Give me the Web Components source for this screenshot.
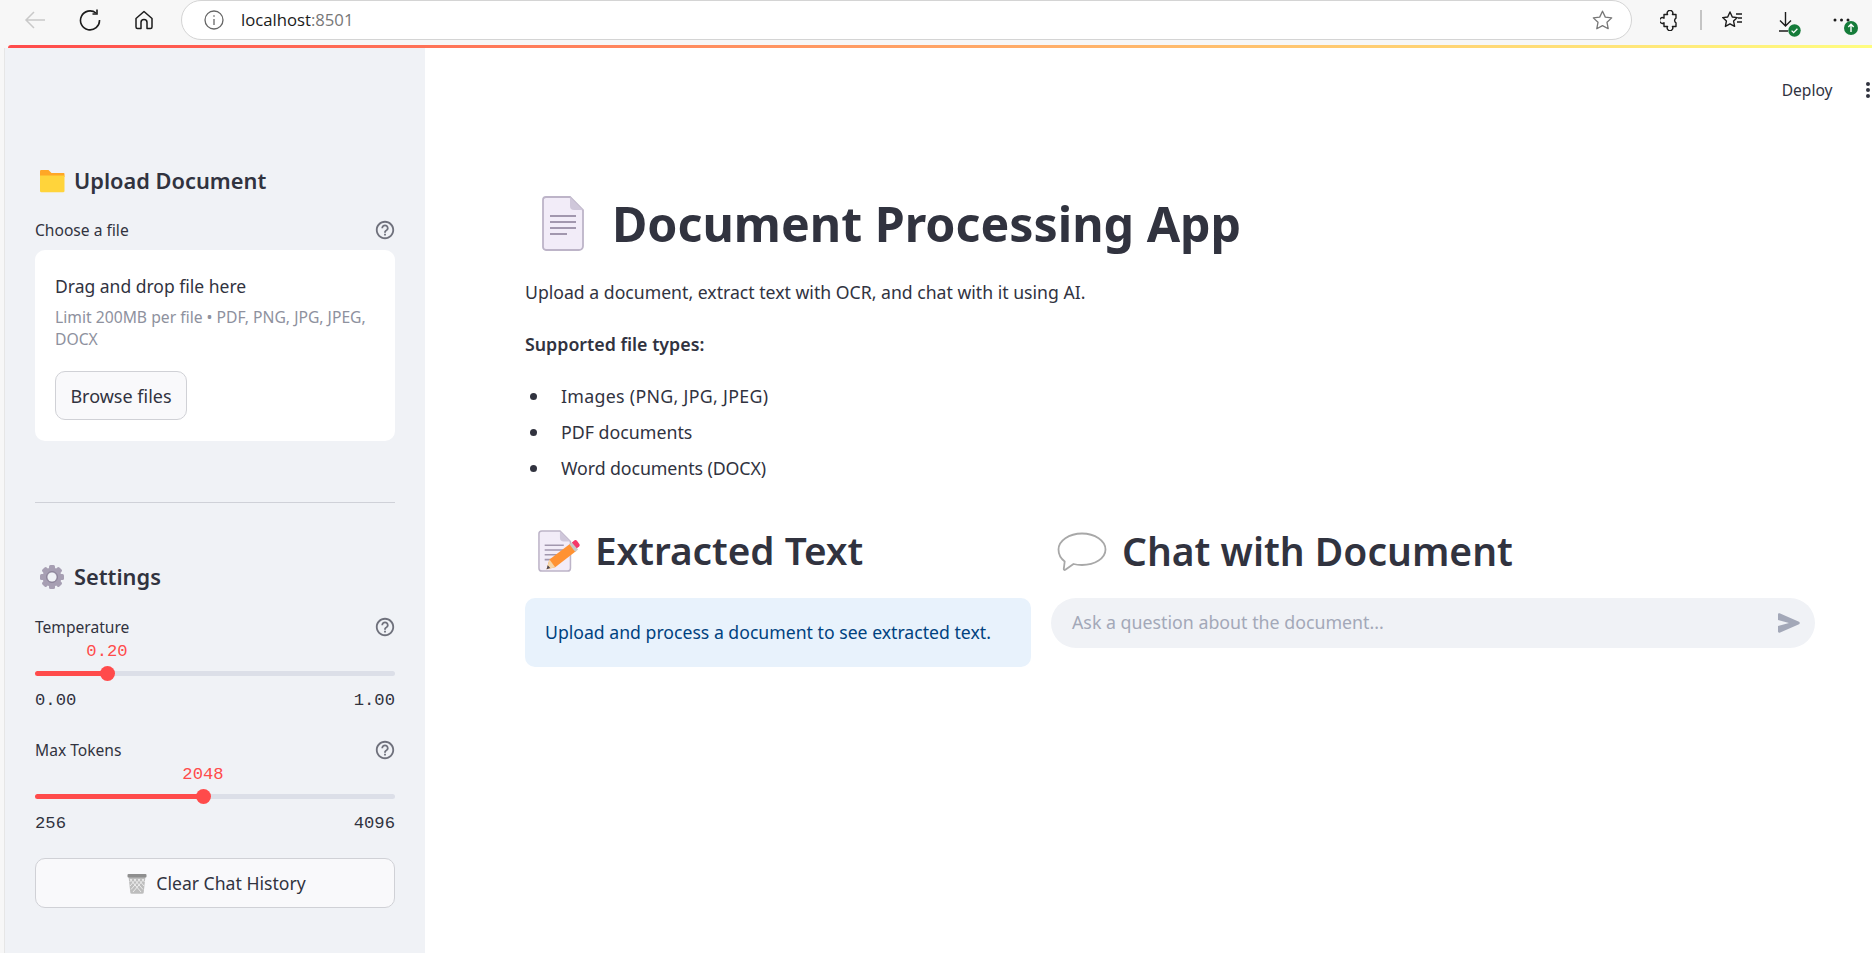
<!DOCTYPE html>
<html lang="en">
<head>
<meta charset="utf-8">
<title>Document Processing App</title>
<style>
  html, body { margin: 0; height: 100%; overflow: hidden; background: #f7f7f7; }
  body { font-family: "Noto Sans", sans-serif; color: #31333f; }
</style>
</head>
<body>
<app-shell></app-shell>

<script>
const ICONS = {
  help: `<svg width="22" height="22" viewBox="0 0 24 24" fill="#6f717c"><path d="M11 18h2v-2h-2v2zm1-16C6.48 2 2 6.48 2 12s4.48 10 10 10 10-4.48 10-10S17.52 2 12 2zm0 18c-4.41 0-8-3.59-8-8s3.59-8 8-8 8 3.59 8 8-3.59 8-8 8zm0-14c-2.21 0-4 1.79-4 4h2c0-1.1.9-2 2-2s2 .9 2 2c0 2-3 1.75-3 5h2c0-2.25 3-2.5 3-5 0-2.21-1.79-4-4-4z"/></svg>`,
  folder: `<svg width="26" height="24" viewBox="0 0 26 24"><path d="M1 2.500C1 1.400 1.600 1 2.500 1h7l3 3h12c.6 0 1 .4 1 1v3H1z" fill="#ffa726"/><path d="M1 6.500h24.500V22c0 .7-.5 1.200-1.200 1.200H2.200C1.500 23.200 1 22.700 1 22z" fill="#ffd43b"/></svg>`,
  gear: `<svg width="26" height="26" viewBox="0 0 26 26"><g fill="#a79fb3"><circle cx="13" cy="13" r="9.500"/><rect x="10" y="1" width="6" height="24" rx="1.500"/><rect x="10" y="1" width="6" height="24" rx="1.500" transform="rotate(45 13 13)"/><rect x="10" y="1" width="6" height="24" rx="1.500" transform="rotate(90 13 13)"/><rect x="10" y="1" width="6" height="24" rx="1.500" transform="rotate(135 13 13)"/></g><circle cx="13" cy="13" r="4.500" fill="#f0f2f6"/><circle cx="13" cy="13" r="5.500" fill="none" stroke="#8b8398" stroke-width="1"/></svg>`,
  trash: `<svg width="20" height="21" viewBox="0 0 20 21"><path d="M1.500 3h17l-1.800 16.500c-.1.800-.6 1.200-1.300 1.200H4.600c-.7 0-1.200-.4-1.300-1.200z" fill="#bdbdbd"/><path d="M3 6l11 13M7 6l9 10.500M11 6l6 7M15 6l2.500 3M17 6L6 19M13 6l-9 10.500M9 6l-6 7M5 6L2.700 9" stroke="#f0f0f0" stroke-width=".9" fill="none"/><rect x="0.500" y="1" width="19" height="3.500" rx="1" fill="#8f8f8f"/></svg>`,
  doc: `<svg width="42" height="55" viewBox="0 0 42 55"><path d="M4 1h24l13 13v36a4 4 0 0 1-4 4H4a3 3 0 0 1-3-3V4a3 3 0 0 1 3-3z" fill="#f2ecf8" stroke="#bdb4c8" stroke-width="1.800"/><path d="M28 1l13 13h-9a4 4 0 0 1-4-4z" fill="#cfc7da"/><path d="M8 20h26M8 26h26M8 32h26M8 38h17" stroke="#a297ae" stroke-width="1.800"/></svg>`,
  memo: `<svg width="42" height="43" viewBox="0 0 44 45"><path d="M4 1h19l11 11v28a3 3 0 0 1-3 3H4a3 3 0 0 1-3-3V4a3 3 0 0 1 3-3z" fill="#f2ecf8" stroke="#bdb4c8" stroke-width="1.600"/><path d="M23 1l11 11h-7a4 4 0 0 1-4-4z" fill="#cfc7da"/><path d="M7 16h20M7 21h20M7 26h15M7 31h9" stroke="#a297ae" stroke-width="1.600"/><path d="M9 41l3-10 22-17 6 8-22 17z" fill="#ff9233"/><path d="M9 41l3-10 6 8z" fill="#f6d5a8"/><path d="M9 41l1.200-4 2.600 2.800z" fill="#4a4450"/><path d="M33 15l3-2.500 6 8-3 2.500z" fill="#c8c8c8"/><path d="M35.500 13l2.600-2.100c.9-.7 2-.5 2.700.4l2.500 3.400c.7.900.5 2-.4 2.700l-2.300 1.800z" fill="#f5386a"/></svg>`,
  bubble: `<svg width="50" height="40" viewBox="0 0 50 40"><path d="M25 1.500c13 0 23.500 7.300 23.500 16S38 33 25 33c-3 0-6-.3-8.500-1l-8.200 5.800c-.9.500-1.700 0-1.500-1l.9-7.300C3.800 26.500 1.500 22.200 1.500 17.500c0-8.700 10.500-16 23.500-16z" fill="#fff" stroke="#a8a8a8" stroke-width="1.800" stroke-linejoin="round"/></svg>`,
  send: `<svg width="23" height="20" viewBox="0 0 23 20"><path d="M1 1.400c0-.9.800-1.400 1.600-1.100L22 8.800c1 .5 1 1.900 0 2.400L2.600 19.700c-.8.300-1.600-.2-1.600-1.100V13l11-3L1 7z" fill="#a3a8b8"/></svg>`
}

class BrowserBar extends HTMLElement {
  constructor () {
    super()
    this.shadow = this.attachShadow({ mode: 'open' })
    this.shadow.innerHTML = /* html */`
    <style>
      :host { display: flex; align-items: center; height: 45px; background: #f7f7f7; box-sizing: border-box; padding-bottom: 5px; position: relative; }
      svg { display: block; flex: none; }
      .nav { display: flex; align-items: center; width: 181px; flex: none; padding-left: 24px; box-sizing: border-box; gap: 33px; }
      .url { flex: none; width: 1451px; height: 40px; box-sizing: border-box; margin-top: -1px; background: #fff; border: 1.500px solid #d4d4d4; border-radius: 20px; display: flex; align-items: center; padding: 0 18px 0 22px; }
      .addr { margin-left: 17px; font: 16.700px "Open Sans", sans-serif; color: #1a1a1a; }
      .addr span { color: #777; }
      .star { margin-left: auto; }
      .tools { display: flex; align-items: center; flex: 1; padding-left: 28px; }
      .sep { width: 1.500px; height: 20px; background: #c4c4c4; margin: 0 19px 0 20px; }
      .fav { margin-right: 36px; }
      .dl { position: relative; width: 24px; height: 24px; margin-right: 30px; flex: none; }
      .dl .arrow { position: absolute; left: 0; top: 4px; }
      .dl .ok { position: absolute; left: 9px; top: 16px; }
      .more { position: relative; width: 26px; height: 24px; flex: none; }
      .more .dots { position: absolute; left: 0; top: 9px; }
      .more .badge { position: absolute; left: 11px; top: 13px; }
    </style>
    <div class="nav">
      <svg width="22" height="20" viewBox="0 0 22 20" fill="none" stroke="#c9c9c9" stroke-width="1.500"><path d="M21 10H2M10 2l-8 8 8 8"/></svg>
      <svg width="22" height="22" viewBox="0 0 22 22" fill="none" stroke="#1c1c1c" stroke-width="1.600"><path d="M17 4a9.500 9.500 0 1 0 3.500 7"/><path d="M18 .5V5h-4.500"/></svg>
      <svg width="20" height="20" viewBox="0 0 20 20" fill="none" stroke="#1c1c1c" stroke-width="1.500" stroke-linejoin="round"><path d="M2 8.500L10 1.500l8 7V17a1.500 1.500 0 0 1-1.500 1.500H13V12.500a3 3 0 0 0-6 0v6H3.500A1.500 1.500 0 0 1 2 17z"/></svg>
    </div>
    <div class="url">
      <svg width="20" height="20" viewBox="0 0 20 20" fill="none" stroke="#666" stroke-width="1.300"><circle cx="10" cy="10" r="9"/><path d="M10 9v6"/><path d="M10 5.200v1.600"/></svg>
      <span class="addr">localhost<span>:8501</span></span>
      <svg class="star" width="21" height="20" viewBox="0 0 21 20" fill="none" stroke="#777" stroke-width="1.300" stroke-linejoin="round"><path d="M10.500 1.200l2.800 5.900 6.400.8-4.700 4.400 1.200 6.400-5.700-3.100-5.700 3.100 1.200-6.400L1.300 7.900l6.400-.8z"/></svg>
    </div>
    <div class="tools">
      <svg width="20" height="21" viewBox="0 0 20 21" fill="none" stroke="#1c1c1c" stroke-width="1.400" stroke-linejoin="round"><path d="M4 4.500H7.600A2.800 2.800 0 1 1 12.400 4.500H16V8.200A2.600 2.600 0 0 0 16 12.800V16.500H12.400A2.800 2.800 0 1 1 7.600 16.500H4V12.800A2.800 2.800 0 1 1 4 8.200Z"/></svg>
      <div class="sep"></div>
      <svg class="fav" width="22" height="21" viewBox="0 0 22 21" fill="none" stroke="#1c1c1c" stroke-width="1.400" stroke-linejoin="round"><path d="M9 2l2.300 5 5 .6-3.700 3.500 1 5.300L9 13.800l-4.600 2.600 1-5.300L1.700 7.600l5-.6z"/><path d="M15 4h6M17 8h4M16 12h5" stroke-width="1.300"/></svg>
      <div class="dl">
        <svg class="arrow" width="14" height="20" viewBox="0 0 14 20" fill="none" stroke="#1c1c1c" stroke-width="1.400"><path d="M6.500 0v14M1 8.500l5.500 5.500L12 8.500M0 19h9"/></svg>
        <svg class="ok" width="13" height="13" viewBox="0 0 13 13"><circle cx="6.500" cy="6.500" r="6.200" fill="#157c3a"/><path d="M3.600 6.600l2 2 3.800-3.800" fill="none" stroke="#fff" stroke-width="1.300"/></svg>
      </div>
      <div class="more">
        <svg class="dots" width="18" height="6" viewBox="0 0 18 6"><circle cx="2" cy="3" r="1.500" fill="#1c1c1c"/><circle cx="8.500" cy="3" r="1.500" fill="#1c1c1c"/><circle cx="15" cy="3" r="1.500" fill="#1c1c1c"/></svg>
        <svg class="badge" width="14" height="14" viewBox="0 0 14 14"><circle cx="7" cy="7" r="7" fill="#157c3a"/><path d="M7 11V3.500M4.300 6L7 3.300 9.700 6" fill="none" stroke="#fff" stroke-width="1.400"/></svg>
      </div>
    </div>
    `
  }
}

class HelpLabel extends HTMLElement {
  constructor () {
    super()
    this.attachShadow({ mode: 'open' }).innerHTML = /* html */`
    <style>
      :host { display: flex; justify-content: space-between; align-items: center; height: 24px; font-size: 15.600px; color: #31333f; }
      svg { display: block; margin-right: -1px; }
    </style>
    <slot></slot>${ICONS.help}
    `
  }
}

class SideHeading extends HTMLElement {
  constructor () {
    super()
    const icon = ICONS[this.getAttribute('icon')]
    this.attachShadow({ mode: 'open' }).innerHTML = /* html */`
    <style>
      :host { display: flex; align-items: center; height: 34px; padding-left: 4px; gap: 9px; font-size: 21.800px; font-weight: 600; color: #31333f; }
      span { display: flex; width: 26px; justify-content: center; }
      slot { display: block; margin-bottom: 2px; }
    </style>
    <span>${icon}</span><slot></slot>
    `
  }
}

class RangeSlider extends HTMLElement {
  constructor () {
    super()
    const pos = this.getAttribute('pos')
    this.attachShadow({ mode: 'open' }).innerHTML = /* html */`
    <style>
      :host { display: block; }
      .rail { position: relative; height: 14px; margin-top: 27px; }
      .track { position: absolute; left: 0; right: 0; top: 5px; height: 4.500px; border-radius: 3px; background: linear-gradient(90deg, #ff4b4b ${pos}px, #dcdfe8 ${pos}px); }
      .thumb { position: absolute; left: ${pos - 7.5}px; top: -.5px; width: 15px; height: 15px; border-radius: 50%; background: #ff4b4b; }
      .value { position: absolute; left: ${pos}px; top: -26px; transform: translateX(-50%); font: 17.200px/24px "Liberation Mono", monospace; color: #ff4b4b; }
      .ticks { display: flex; justify-content: space-between; height: 24px; margin-top: 9px; font: 17.200px/24px "Liberation Mono", monospace; color: #31333f; }
    </style>
    <help-label>${this.getAttribute('label')}</help-label>
    <div class="rail">
      <div class="track"></div>
      <div class="thumb"></div>
      <div class="value">${this.getAttribute('value')}</div>
    </div>
    <div class="ticks"><span>${this.getAttribute('min')}</span><span>${this.getAttribute('max')}</span></div>
    `
  }
}

class UploadBox extends HTMLElement {
  constructor () {
    super()
    this.attachShadow({ mode: 'open' }).innerHTML = /* html */`
    <style>
      :host { display: block; background: #fff; border-radius: 10px; padding: 24px 20px 21px; margin-top: 8px; }
      .drag { font-size: 17.500px; line-height: 24px; color: #31333f; }
      .limit { margin-top: 8px; font-size: 15.700px; line-height: 22px; color: #8e919e; }
      button { display: block; margin-top: 21px; width: 132px; height: 49px; box-sizing: border-box; font: 18px "Noto Sans", sans-serif; color: #31333f; background: #f9f9fb; border: 1px solid #d0d1d6; border-radius: 10px; padding: 0; }
    </style>
    <div class="drag">Drag and drop file here</div>
    <div class="limit">Limit 200MB per file • PDF, PNG, JPG, JPEG, DOCX</div>
    <button>Browse files</button>
    `
  }
}

class SideBar extends HTMLElement {
  constructor () {
    super()
    this.attachShadow({ mode: 'open' }).innerHTML = /* html */`
    <style>
      :host { display: block; width: 421px; flex: none; box-sizing: border-box; background: #f0f2f6; padding: 116px 30px 0 30px; border-left: 1px solid #e6e6e6; }
      hr { border: 0; height: 1px; background: #cfd1d8; margin: 61px 0 57px; }
      button { display: flex; align-items: center; justify-content: center; gap: 9px; width: 100%; height: 50px; margin-top: 22px; box-sizing: border-box; font: 17.600px "Noto Sans", sans-serif; color: #31333f; background: #f9f9fb; border: 1px solid #d0d1d6; border-radius: 10px; padding: 0 0 0 3px; }
      svg { display: block; }
    </style>
    <side-heading icon="folder">Upload Document</side-heading>
    <help-label style="margin-top:20px">Choose a file</help-label>
    <upload-box></upload-box>
    <hr>
    <side-heading icon="gear">Settings</side-heading>
    <range-slider style="margin-top:21px" label="Temperature" value="0.20" min="0.00" max="1.00" pos="72"></range-slider>
    <range-slider style="margin-top:25px" label="Max Tokens" value="2048" min="256" max="4096" pos="168"></range-slider>
    <button>${ICONS.trash}<span>Clear Chat History</span></button>
    `
  }
}

class SectionTitle extends HTMLElement {
  constructor () {
    super()
    const icon = ICONS[this.getAttribute('icon')]
    this.attachShadow({ mode: 'open' }).innerHTML = /* html */`
    <style>
      :host { display: flex; align-items: center; height: 60px; font-size: 39px; font-weight: 600; color: #31333f; }
      svg { display: block; flex: none; margin-bottom: 1px; }
      slot { display: block; margin-bottom: 4px; }
    </style>
    ${icon}<slot></slot>
    `
  }
}

class MainView extends HTMLElement {
  constructor () {
    super()
    this.attachShadow({ mode: 'open' }).innerHTML = /* html */`
    <style>
      :host { display: block; flex: 1; min-width: 0; background: #fff; padding: 0 57px 0 100px; color: #31333f; font-size: 17.650px; position: relative; }
      .deploy { display: flex; justify-content: flex-end; align-items: center; height: 24px; padding-top: 30px; margin-right: -57px; font-size: 15.600px; }
      .deploy svg { display: block; margin: 0 2.500px 0 33px; }
      h1 { display: flex; align-items: center; height: 70px; margin: 86px 0 0; padding-left: 17px; font-size: 48.300px; font-weight: 700; }
      h1 svg { display: block; margin-right: 28px; }
      p { margin: 20px 0 0; line-height: 28px; }
      p.types { margin-top: 24px; font-weight: 600; font-size: 17.800px; }
      ul { list-style: none; margin: 20px 0 0; padding: 0 0 0 36px; font-size: 17.800px; }
      li { position: relative; height: 36px; line-height: 36px; }
      li::before { content: ""; position: absolute; left: -31.500px; top: 15px; width: 7px; height: 7px; border-radius: 50%; background: #31333f; }
      li.caps { letter-spacing: .3px; }
      li.word { letter-spacing: -.1px; }
      .cols { display: grid; grid-template-columns: 506px 764px; column-gap: 20px; margin-top: 36px; }
      .info { margin-top: 16px; height: 69px; display: flex; align-items: center; padding: 0 0 1px 20px; box-sizing: border-box; background: #e8f2fc; border-radius: 10px; color: #004280; }
      .chat { margin-top: 16px; height: 50px; display: flex; align-items: center; justify-content: space-between; padding: 0 15px 0 21px; box-sizing: border-box; background: #f0f2f6; border-radius: 25px; color: #a3a8b8; font-size: 17.800px; }
      .chat span { margin-bottom: 3px; }
      .chat svg { display: block; }
    </style>
    <div class="deploy">Deploy
      <svg width="4" height="16" viewBox="0 0 4 16" fill="#31333f"><circle cx="2" cy="2" r="2"/><circle cx="2" cy="8" r="2"/><circle cx="2" cy="14" r="2"/></svg>
    </div>
    <h1>${ICONS.doc}Document Processing App</h1>
    <p>Upload a document, extract text with OCR, and chat with it using AI.</p>
    <p class="types">Supported file types:</p>
    <ul>
      <li class="caps">Images (PNG, JPG, JPEG)</li>
      <li>PDF documents</li>
      <li class="word">Word documents (DOCX)</li>
    </ul>
    <div class="cols">
      <div>
        <section-title icon="memo" style="padding-left:13px;gap:15px;font-size:38.700px">Extracted Text</section-title>
        <div class="info">Upload and process a document to see extracted text.</div>
      </div>
      <div>
        <section-title icon="bubble" style="padding-left:6px;gap:15px">Chat with Document</section-title>
        <div class="chat"><span>Ask a question about the document...</span>${ICONS.send}</div>
      </div>
    </div>
    `
  }
}

class AppShell extends HTMLElement {
  constructor () {
    super()
    this.attachShadow({ mode: 'open' }).innerHTML = /* html */`
    <style>
      :host { display: flex; flex-direction: column; height: 953px; overflow: hidden; }
      .stripe { height: 3px; margin-left: 8px; flex: none; border-top-left-radius: 4px; background: linear-gradient(90deg, #ff4b4b, #fffd80); }
      .body { flex: 1; display: flex; padding-left: 4px; min-height: 0; }
    </style>
    <browser-bar></browser-bar>
    <div class="stripe"></div>
    <div class="body">
      <side-bar></side-bar>
      <main-view></main-view>
    </div>
    `
  }
}

customElements.define('browser-bar', BrowserBar)
customElements.define('help-label', HelpLabel)
customElements.define('side-heading', SideHeading)
customElements.define('range-slider', RangeSlider)
customElements.define('upload-box', UploadBox)
customElements.define('side-bar', SideBar)
customElements.define('section-title', SectionTitle)
customElements.define('main-view', MainView)
customElements.define('app-shell', AppShell)
</script>
</body>
</html>
